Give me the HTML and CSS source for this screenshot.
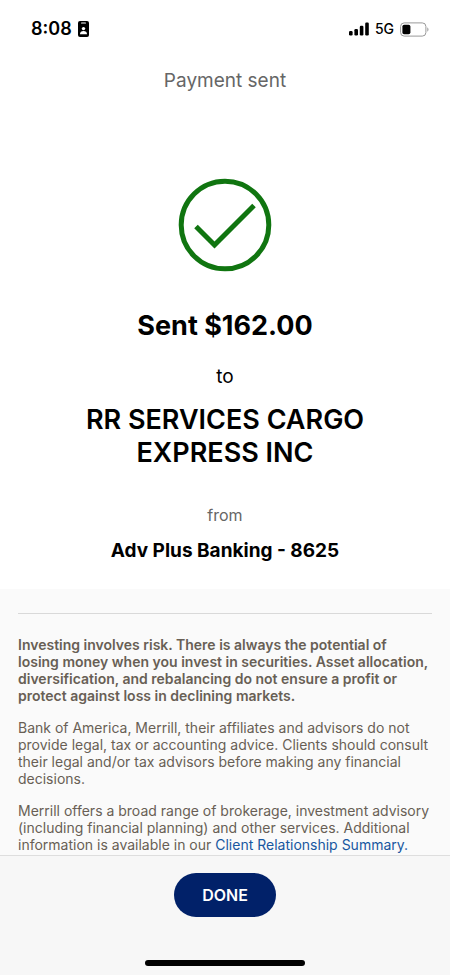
FILE: index.html
```html
<!DOCTYPE html>
<html lang="en">
<head>
<meta charset="utf-8">
<meta name="viewport" content="width=device-width, initial-scale=1">
<title>Payment sent</title>
<link rel="stylesheet" href="styles.css">
</head>
<body>
<div class="status">
  <div class="status-group">
    <span class="clock">8:08</span>
    <svg class="badge-icon" width="11" height="16" viewBox="0 0 11 16" aria-hidden="true">
      <rect width="11" height="16" rx="2"/>
      <rect x="3" y="1.4" width="5" height="1.2" rx=".6" fill="#fff"/>
      <circle cx="5.5" cy="7.6" r="1.7" fill="#fff"/>
      <path d="M2 13.2c0-2.2 1.4-3.2 3.5-3.2S9 11 9 13.2z" fill="#fff"/>
    </svg>
  </div>
  <div class="status-group">
    <svg width="20" height="14" viewBox="0 0 20 14" aria-hidden="true">
      <rect x="0" y="9" width="3.600" height="4.500" rx="1.200"/>
      <rect x="5.400" y="7" width="3.600" height="6.500" rx="1.200"/>
      <rect x="10.800" y="3.800" width="3.600" height="9.700" rx="1.200"/>
      <rect x="16.200" y="0.500" width="3.600" height="13" rx="1.200"/>
    </svg>
    <span class="network">5G</span>
    <svg width="29" height="15" viewBox="0 0 29 15" aria-hidden="true">
      <rect x=".6" y=".9" width="25.300" height="13.200" rx="3.600" fill="none" stroke="#999"/>
      <rect x="2.400" y="2.700" width="8" height="9.600" rx="1.800"/>
      <path d="M27.300 5.300c1.600.7 1.600 3.700 0 4.400z" fill="#999"/>
    </svg>
  </div>
</div>
<header class="title">Payment sent</header>
<main class="content">
  <section class="receipt">
    <svg class="check" width="94" height="94" viewBox="0 0 94 94" aria-hidden="true">
      <circle cx="47" cy="47" r="43.800"/>
      <path d="M18 48.500 36.500 67 76 27.500"/>
    </svg>
    <h1 class="headline">Sent $162.00</h1>
    <p class="to">to</p>
    <h2 class="headline payee">RR SERVICES CARGO EXPRESS INC</h2>
    <p class="from">from</p>
    <p class="account">Adv Plus Banking - 8625</p>
  </section>
  <section class="legal">
    <hr>
    <p class="risk">Investing involves risk. There is always the potential of losing money when you invest in securities. Asset allocation, diversification, and rebalancing do not ensure a profit or protect against loss in declining markets.</p>
    <p>Bank of America, Merrill, their affiliates and advisors do not provide legal, tax or accounting advice. Clients should consult their legal and/or tax advisors before making any financial decisions.</p>
    <p>Merrill offers a broad range of brokerage, investment advisory (including financial planning) and other services. Additional information is available in our <a href="#summary">Client Relationship Summary.</a></p>
  </section>
</main>
<footer class="actions">
  <button type="button" class="done">DONE</button>
  <div class="home-bar"></div>
</footer>
</body>
</html>
```
FILE: styles.css
```css
* {
  box-sizing: border-box;
}

body {
  display: flex;
  flex-direction: column;
  height: 100vh;
  margin: 0;
  background: #fff;
  color: #000;
  font-family: Inter, "Liberation Sans", sans-serif;
}

h1, h2, p {
  margin: 0;
}

.status {
  display: flex;
  justify-content: space-between;
  align-items: center;
  padding: 17px 21px 0 31px;
  line-height: 24px;
}

.status-group {
  display: flex;
  align-items: center;
  gap: 6px;
}

.clock {
  font-size: 18px;
  font-weight: 600;
}

.network {
  font-size: 14px;
  font-weight: 500;
}

.title {
  padding-top: 28px;
  color: #666;
  font-size: 19px;
  line-height: 24px;
  text-align: center;
}

.content {
  flex: 1;
  min-height: 0;
  overflow: hidden;
  background: #fafafa;
}

.receipt {
  display: flex;
  flex-direction: column;
  align-items: center;
  padding: 85px 60px 26px;
  background: #fff;
  text-align: center;
}

.check {
  fill: none;
  stroke: #107510;
  stroke-width: 5;
}

.headline {
  margin-top: 37px;
  font-size: 27px;
  font-weight: 700;
  line-height: 33px;
}

.to {
  margin-top: 23px;
  font-size: 19px;
  line-height: 24px;
}

.payee {
  margin-top: 14px;
  font-weight: 600;
}

.from {
  margin-top: 34px;
  color: #666;
  font-size: 16px;
  line-height: 24px;
}

.account {
  margin-top: 12px;
  font-size: 19px;
  font-weight: 700;
  line-height: 24px;
}

.legal {
  padding: 24px 18px 0;
  color: #685f55;
  font-size: 14px;
  line-height: 17px;
}

.legal hr {
  height: 1px;
  margin: 0 0 22px;
  border: 0;
  background: #d9d9d9;
}

.legal p + p {
  margin-top: 15px;
}

.legal .risk {
  padding-right: 4px;
  font-weight: 600;
}

.legal a {
  color: #1857a0;
  text-decoration: none;
}

.actions {
  display: flex;
  flex-direction: column;
  align-items: center;
  justify-content: space-between;
  height: 120px;
  padding: 17px 0 9px;
  border-top: 1px solid #dedede;
  background: #f7f7f7;
}

.done {
  padding: 10px 28px;
  border: 0;
  border-radius: 22px;
  background: #012169;
  color: #fff;
  font: 600 16px/24px Inter, "Liberation Sans", sans-serif;
}

.home-bar {
  width: 160px;
  height: 6px;
  border-radius: 3px;
  background: #000;
}
```
